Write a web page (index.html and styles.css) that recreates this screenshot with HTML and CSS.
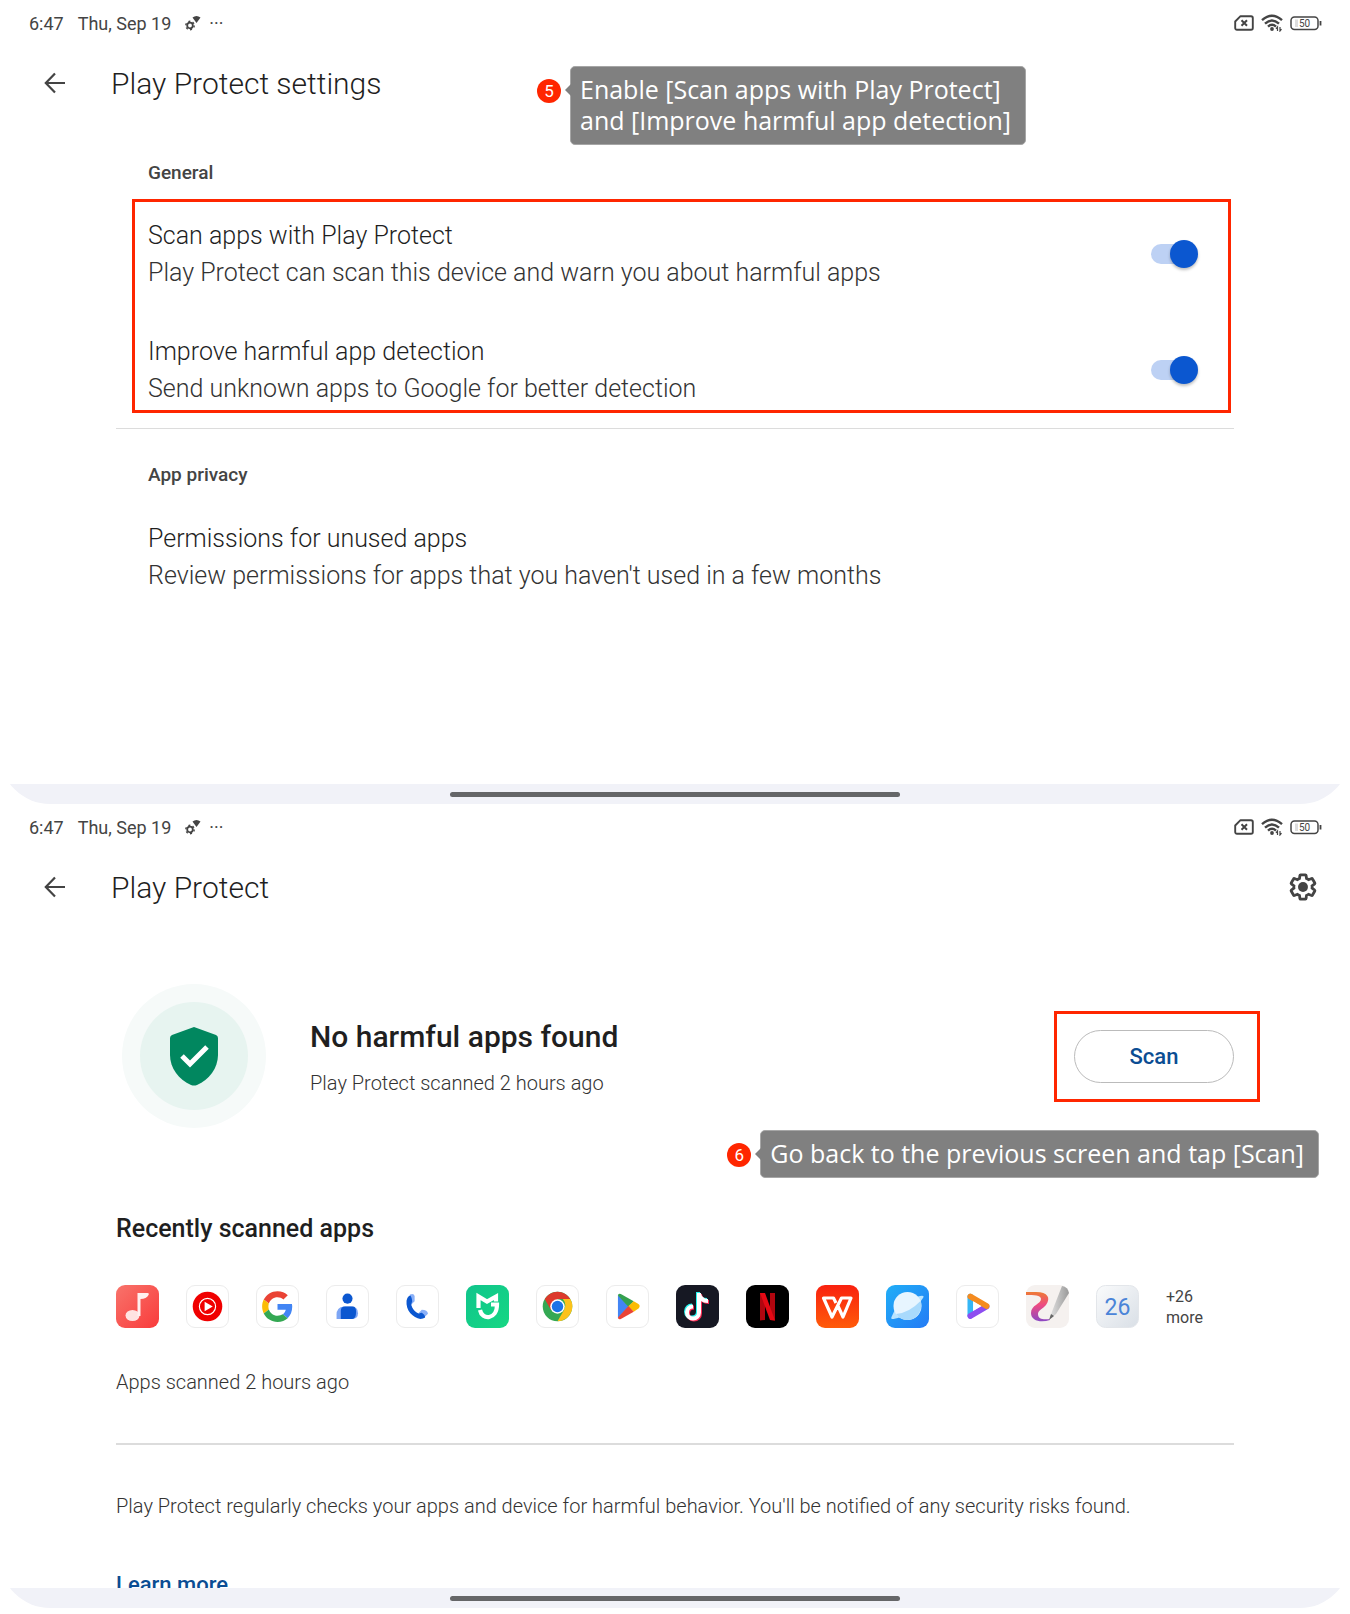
FILE: index.html
```html
<!DOCTYPE html>
<html lang="en">
<head>
    <meta charset="UTF-8">
    <meta name="viewport" content="width=device-width, initial-scale=1.0">
    <title>Play Protect</title>
    <link rel="stylesheet" href="styles.css">
</head>
<body>
    <!-- Shared status bar icons -->
    <svg class="sprite" aria-hidden="true">
        <symbol id="icon-gear-wifi" viewBox="0 0 16 16">
            <circle cx="5" cy="10.500" r="2.800" fill="none" stroke="currentColor" stroke-width="1.800"/>
            <circle cx="5" cy="10.500" r="4.200" fill="none" stroke="currentColor" stroke-width="1.400" stroke-dasharray="2 2.400"/>
            <path d="M7.500 2.500Q11.500-.5 15.500 2.500L11.500 8z" fill="currentColor"/>
        </symbol>
        <symbol id="icon-sim" viewBox="0 0 20 16">
            <path d="M6.500 1.200h10.500a1.800 1.800 0 0 1 1.800 1.800v10a1.800 1.800 0 0 1-1.800 1.800H3A1.800 1.800 0 0 1 1.200 13V6.500z" fill="none" stroke="currentColor" stroke-width="1.900" stroke-linejoin="round"/>
            <path d="M7.500 5.200l5.500 5.600M13 5.200l-5.500 5.600" stroke="currentColor" stroke-width="2"/>
        </symbol>
        <symbol id="icon-wifi" viewBox="0 0 22 18">
            <path d="M1 6.200Q11-2.800 21 6.200M4 9.600Q11 3.200 18 9.600M7 12.700Q11 9 15 12.700" fill="none" stroke="currentColor" stroke-width="2.400"/>
            <circle cx="11" cy="15" r="1.900" fill="currentColor"/>
            <path d="M16.500 17v-4l-1.500 1.800M19 13v4l1.500-1.800" fill="none" stroke="currentColor" stroke-width="1.200"/>
        </symbol>
        <symbol id="icon-battery" viewBox="0 0 32 15">
            <rect x="1" y="1" width="27" height="12.500" rx="3.500" fill="none" stroke="currentColor" stroke-width="1.500"/>
            <path d="M5 3.500h3v7.500H5z" fill="#ddd"/>
            <path d="M30.500 5v4.500" stroke="currentColor" stroke-width="1.800"/>
            <text x="14.500" y="11" font-size="10" text-anchor="middle" fill="currentColor">50</text>
        </symbol>
        <symbol id="icon-back" viewBox="0 0 22 22">
            <path d="M21 11H2M11 1.500L1.800 11l9.200 9.500" fill="none" stroke="currentColor" stroke-width="2.200"/>
        </symbol>
    </svg>

    <section class="screen">
        <div class="status-bar">
            <span>6:47</span>
            <span>Thu, Sep 19</span>
            <svg class="icon-alert"><use href="#icon-gear-wifi"/></svg>
            <span class="dots">···</span>
            <div class="status-right">
                <svg class="icon-sim"><use href="#icon-sim"/></svg>
                <svg class="icon-wifi"><use href="#icon-wifi"/></svg>
                <svg class="icon-battery"><use href="#icon-battery"/></svg>
            </div>
        </div>

        <header class="app-bar">
            <button class="icon-button" aria-label="Back"><svg class="icon-back"><use href="#icon-back"/></svg></button>
            <h1>Play Protect settings</h1>
        </header>

        <div class="callout callout-settings">
            <span class="step">5</span>
            <p class="bubble">Enable [Scan apps with Play Protect]<br>and [Improve harmful app detection]</p>
        </div>

        <main class="settings">
            <h2>General</h2>
            <div class="highlight">
                <div class="row">
                    <label for="scan-apps">
                        <span class="row-title">Scan apps with Play Protect</span>
                        <span class="row-text">Play Protect can scan this device and warn you about harmful apps</span>
                    </label>
                    <input type="checkbox" class="switch" id="scan-apps" checked>
                </div>
                <div class="row">
                    <label for="improve-detection">
                        <span class="row-title">Improve harmful app detection</span>
                        <span class="row-text">Send unknown apps to Google for better detection</span>
                    </label>
                    <input type="checkbox" class="switch" id="improve-detection" checked>
                </div>
            </div>
            <hr>
            <h2>App privacy</h2>
            <a class="row row-link" href="#permissions">
                <span class="row-title">Permissions for unused apps</span>
                <span class="row-text">Review permissions for apps that you haven't used in a few months</span>
            </a>
        </main>

        <div class="nav-bar"><span class="home"></span></div>
    </section>

    <section class="screen">
        <div class="status-bar">
            <span>6:47</span>
            <span>Thu, Sep 19</span>
            <svg class="icon-alert"><use href="#icon-gear-wifi"/></svg>
            <span class="dots">···</span>
            <div class="status-right">
                <svg class="icon-sim"><use href="#icon-sim"/></svg>
                <svg class="icon-wifi"><use href="#icon-wifi"/></svg>
                <svg class="icon-battery"><use href="#icon-battery"/></svg>
            </div>
        </div>

        <header class="app-bar">
            <button class="icon-button" aria-label="Back"><svg class="icon-back"><use href="#icon-back"/></svg></button>
            <h1>Play Protect</h1>
            <button class="icon-button settings-button" aria-label="Settings">
                <svg class="icon-settings" viewBox="1 1 22 22">
                    <path d="M19.140 12.940c.04-.3.06-.61.06-.94 0-.32-.02-.64-.07-.94l2.030-1.580c.18-.14.23-.41.12-.61l-1.920-3.320c-.12-.22-.37-.29-.59-.22l-2.390.96c-.5-.38-1.030-.7-1.620-.94l-.36-2.540c-.04-.24-.24-.41-.48-.41h-3.840c-.24 0-.43.17-.47.41l-.36 2.540c-.59.24-1.130.57-1.620.94l-2.390-.96c-.22-.08-.47 0-.59.22L2.740 8.870c-.12.21-.08.47.12.61l2.030 1.580c-.05.3-.09.63-.09.94s.02.64.07.94l-2.030 1.580c-.18.14-.23.41-.12.61l1.920 3.320c.12.22.37.29.59.22l2.390-.96c.5.38 1.030.7 1.620.94l.36 2.540c.05.24.24.41.48.41h3.840c.24 0 .44-.17.47-.41l.36-2.540c.59-.24 1.130-.56 1.620-.94l2.390.96c.22.08.47 0 .59-.22l1.920-3.320c.12-.22.07-.47-.12-.61z" fill="none" stroke="currentColor" stroke-width="2.200"/>
                    <circle cx="12" cy="12" r="3.900" fill="currentColor"/>
                </svg>
            </button>
        </header>

        <main class="protect">
            <div class="summary">
                <svg class="shield" viewBox="0 0 144 144">
                    <circle cx="72" cy="72" r="72" fill="#f6faf9"/>
                    <circle cx="72" cy="72" r="54" fill="#e7f4f0"/>
                    <path d="M72 43l22 8q2 1 2 3v17c0 13-9 25-21 30q-3 1-6 0c-12-5-21-17-21-30V54q0-2 2-3z" fill="#01875f"/>
                    <path d="M60 72l8 8 17-17" fill="none" stroke="#fff" stroke-width="5"/>
                </svg>
                <div class="summary-text">
                    <h2>No harmful apps found</h2>
                    <p>Play Protect scanned 2 hours ago</p>
                </div>
                <div class="highlight-scan">
                    <button class="scan">Scan</button>
                </div>
            </div>

            <div class="callout callout-scan">
                <span class="step">6</span>
                <p class="bubble">Go back to the previous screen and tap [Scan]</p>
            </div>

            <h3>Recently scanned apps</h3>
            <div class="apps">
                <svg class="app" viewBox="0 0 43 43">
                    <defs><linearGradient id="music" x2="1" y2="1"><stop stop-color="#f8736b"/><stop offset="1" stop-color="#f93b3b"/></linearGradient></defs>
                    <rect width="43" height="43" rx="9" fill="url(#music)"/>
                    <ellipse cx="16.500" cy="30.500" rx="7" ry="5.500" fill="#ffe3e1"/>
                    <path d="M21.500 8h10q2 0 1 2-2 4-8 4v17h-3z" fill="#fff0ef"/>
                </svg>
                <svg class="app app-light" viewBox="0 0 43 43">
                    <circle cx="21.500" cy="21.500" r="15.500" fill="#f00000"/>
                    <circle cx="21.500" cy="21.500" r="8.500" fill="none" stroke="#fff" stroke-width="1.200"/>
                    <path d="M18.500 16.500l8.500 5-8.500 5z" fill="#fff"/>
                </svg>
                <svg class="app app-light" viewBox="-8 -8 64 64">
                    <path fill="#ea4335" d="M24 9.500c3.540 0 6.710 1.220 9.210 3.600l6.850-6.850C35.900 2.380 30.470 0 24 0 14.620 0 6.510 5.380 2.560 13.220l7.980 6.190C12.430 13.720 17.740 9.500 24 9.500z"/>
                    <path fill="#4285f4" d="M46.980 24.550c0-1.570-.15-3.090-.38-4.550H24v9.020h12.940c-.58 2.960-2.260 5.480-4.780 7.180l7.730 6c4.510-4.180 7.090-10.360 7.090-17.650z"/>
                    <path fill="#fbbc05" d="M10.530 28.590c-.48-1.450-.76-2.990-.76-4.590s.27-3.140.76-4.590l-7.980-6.190C.92 16.460 0 20.120 0 24c0 3.880.92 7.540 2.560 10.780z"/>
                    <path fill="#34a853" d="M24 48c6.480 0 11.930-2.130 15.890-5.810l-7.730-6c-2.150 1.450-4.920 2.300-8.160 2.300-6.260 0-11.570-4.220-13.470-9.910l-7.980 6.190C6.510 42.620 14.620 48 24 48z"/>
                </svg>
                <svg class="app app-light" viewBox="0 0 43 43">
                    <path d="M10 34.500v-4q0-8.500 7.500-9h8q7 0 7 7 0 6-6 6z" fill="#7da6f5"/>
                    <path d="M14.500 34.500V26q0-4.500 4.500-4.500h8q3.500 0 3.500 5.500 0 7.500-4 7.500z" fill="#0b57d0"/>
                    <circle cx="21.500" cy="13.200" r="5.300" fill="#0b57d0"/>
                </svg>
                <svg class="app app-light" viewBox="0 0 43 43">
                    <path d="M13.500 9q4-2 5 1.500v5.500l-4 4zM22 29l4-4q6 0 6.500 4l-4 4z" fill="#8ab0f8"/>
                    <path d="M13.500 10c1 0 2 2 2.500 6q-1 2-1 4c1 4 4 7.500 8 9q1.500-1 3-1c2 1 3.500 3 3.500 5q-2 1.500-5 1.500C17 33.500 9 26 10 15.500q1-4.500 3.500-5.500z" fill="#0b57d0"/>
                </svg>
                <svg class="app" viewBox="0 0 43 43">
                    <defs><linearGradient id="home" x2="1" y2="1"><stop stop-color="#10c58c"/><stop offset="1" stop-color="#16d783"/></linearGradient></defs>
                    <rect width="43" height="43" rx="9" fill="url(#home)"/>
                    <path d="M12.500 23V11.500l8.500 5 9-5v5" fill="none" stroke="#fff" stroke-width="4.200"/>
                    <path d="M14 25c2 10.500 17 10 17-5.500h-6" fill="none" stroke="#fff" stroke-width="4.200"/>
                </svg>
                <svg class="app app-light" viewBox="0 0 43 43">
                    <circle cx="21.500" cy="21.500" r="15.500" fill="#34a853"/>
                    <path d="M8.100 13.700a15.500 15.500 0 0 1 26.800 0H21.500l-6.700 11.700z" fill="#dc3a2c"/>
                    <path d="M34.900 13.700A15.500 15.500 0 0 1 21.500 37l6.700-11.600q3.300-6-1-11.700z" fill="#fcc21b"/>
                    <circle cx="21.500" cy="21.500" r="7.600" fill="#fff"/>
                    <circle cx="21.500" cy="21.500" r="6" fill="#1a73e8"/>
                </svg>
                <svg class="app app-light" viewBox="0 0 43 43">
                    <path d="M11.500 9.500v24L23 21.500z" fill="#4285f4"/>
                    <path d="M11.500 10q0-2.500 3-1.500L28 16l-5.500 6z" fill="#34a04f"/>
                    <path d="M28 16l5 3q2.500 2 0 4.500L28 27l-6-5.500z" fill="#fbbc04"/>
                    <path d="M11.500 33q0 2.500 3 1.500L28 27l-5.500-6z" fill="#ea4335"/>
                </svg>
                <svg class="app" viewBox="0 0 43 43">
                    <rect width="43" height="43" rx="9" fill="#161823"/>
                    <g fill="none" stroke-width="4">
                        <path d="M22 7v19.500a6 6 0 1 1-6-6M22 8c1 4 4 7 9 7" stroke="#25f4ee"/>
                        <path d="M24 9v19.500a6 6 0 1 1-6-6M24 10c1 4 4 7 9 7" stroke="#fe2c55"/>
                        <path d="M23 8v19.500a6 6 0 1 1-6-6M23 9c1 4 4 7 9 7" stroke="#fff"/>
                    </g>
                </svg>
                <svg class="app" viewBox="0 0 43 43">
                    <rect width="43" height="43" rx="9" fill="#000"/>
                    <path d="M14 8h5v27l-5 .5zM24 8h5v27.500l-5-.5z" fill="#b1060f"/>
                    <path d="M14 8h5l10 27.500-5-.5z" fill="#e50914"/>
                </svg>
                <svg class="app" viewBox="0 0 43 43">
                    <defs><linearGradient id="office" x2="0" y2="1"><stop stop-color="#f9210f"/><stop offset="1" stop-color="#ff5b0a"/></linearGradient></defs>
                    <rect width="43" height="43" rx="9" fill="url(#office)"/>
                    <path d="M20 18l-2.500-5H7.500l8.500 19 9.500-19H35l-8 19-5-11" fill="none" stroke="#fff" stroke-width="3.200" stroke-linejoin="round"/>
                </svg>
                <svg class="app" viewBox="0 0 43 43">
                    <defs><linearGradient id="browser" x2="1" y2="1"><stop stop-color="#20aef7"/><stop offset="1" stop-color="#247bf5"/></linearGradient></defs>
                    <rect width="43" height="43" rx="9" fill="url(#browser)"/>
                    <path d="M9 24.500L5.500 32q-1 2.500 2 2Q25 31 37 13q2-3-3-2l-4 1z" fill="#b9e4ff"/>
                    <circle cx="21.500" cy="21" r="14" fill="#e7f5ff"/>
                    <path d="M10 29Q23 28 34.500 16c3 8-3 19-13 19q-7 0-11.500-6z" fill="#a9dafc"/>
                </svg>
                <svg class="app app-light" viewBox="0 0 43 43">
                    <path d="M14 11v20" stroke="#35b6f5" stroke-width="6" stroke-linecap="round"/>
                    <path d="M14 31.500L31 21.500" stroke="#8d4df0" stroke-width="6" stroke-linecap="round"/>
                    <path d="M14 11l17 10" stroke="#f58b1f" stroke-width="6" stroke-linecap="round"/>
                    <path d="M17 16l8.500 5-8.500 5z" fill="#fff"/>
                </svg>
                <svg class="app" viewBox="0 0 43 43">
                    <defs>
                        <linearGradient id="brush" x2="0" y2="1"><stop stop-color="#ee7a35"/><stop offset=".45" stop-color="#ed4a83"/><stop offset="1" stop-color="#8b48c4"/></linearGradient>
                        <linearGradient id="pen"><stop stop-color="#e4e4e4"/><stop offset="1" stop-color="#999"/></linearGradient>
                    </defs>
                    <rect width="43" height="43" rx="9" fill="#f5f1ef"/>
                    <path d="M0 7h10c12 0 15 6 10 13-3 4-8 5-8 9 0 5 5 6 12 5v1c-9 3-19 1-19-7 0-8 10-9 10-14 0-4-7-4-15-4z" fill="url(#brush)"/>
                    <path d="M23 35l4-11L36 1q6 1 7 7L30 29z" fill="url(#pen)"/>
                    <path d="M23 35l2-6 3 2z" fill="#666"/>
                </svg>
                <svg class="app" viewBox="0 0 43 43">
                    <defs><linearGradient id="calendar" x2="1" y2="1"><stop stop-color="#fafbfc"/><stop offset="1" stop-color="#d9dfe6"/></linearGradient></defs>
                    <rect x=".5" y=".5" width="42" height="42" rx="9" fill="url(#calendar)" stroke="#e3e6ea"/>
                    <text x="21.500" y="30" font-size="23" text-anchor="middle" fill="#4a84d8">26</text>
                </svg>
                <span class="apps-more">+26 more</span>
            </div>
            <p class="note">Apps scanned 2 hours ago</p>
            <hr class="divider">
            <p class="note">Play Protect regularly checks your apps and device for harmful behavior. You'll be notified of any security risks found.</p>
            <a class="learn-more" href="#learn">Learn more</a>
        </main>

        <div class="nav-bar"><span class="home"></span></div>
    </section>
</body>
</html>
```
FILE: styles.css
```css
* {
    box-sizing: border-box;
}

body {
    margin: 0;
    padding-bottom: 6px;
    font-family: Roboto, "Liberation Sans", sans-serif;
    background-color: #fff;
    color: #1f1f1f;
}

h1, h2, h3, p {
    margin: 0;
    font-weight: 400;
}

.sprite {
    display: none;
}

.screen {
    position: relative;
    overflow: hidden;
    border-radius: 0 0 50px 50px;
}

/* Status bar */
.status-bar {
    display: flex;
    align-items: center;
    height: 46px;
    padding: 0 28px 0 29px;
    font-size: 18px;
    color: #444;
}

.status-bar span {
    margin-right: 14px;
}

.icon-alert {
    width: 16px;
    height: 16px;
    margin-right: 8px;
}

.status-right {
    display: flex;
    align-items: center;
    gap: 7px;
    margin-left: auto;
}

.icon-sim {
    width: 20px;
    height: 16px;
}

.icon-wifi {
    width: 22px;
    height: 18px;
}

.icon-battery {
    width: 32px;
    height: 15px;
}

/* App bar */
.app-bar {
    display: flex;
    align-items: center;
    height: 74px;
    padding: 0 32px;
}

.app-bar h1 {
    margin-left: 34px;
    font-size: 30px;
    font-weight: 300;
}

.icon-button {
    display: flex;
    align-items: center;
    justify-content: center;
    width: 45px;
    height: 45px;
    padding: 0;
    border: none;
    background: none;
    color: #444;
    cursor: pointer;
}

.icon-back {
    width: 22px;
    height: 22px;
}

.settings-button {
    margin-left: auto;
    margin-right: -7px;
}

.icon-settings {
    width: 28px;
    height: 28px;
}

/* Settings list */
.settings {
    padding: 39px 116px 190px;
}

.settings h2 {
    margin-left: 32px;
    font-size: 19px;
    font-weight: 500;
    line-height: 28px;
    color: #444;
}

.highlight {
    display: flex;
    flex-direction: column;
    gap: 42px;
    margin: 12px 3px 15px 16px;
    padding: 15px 33px 3px 13px;
    border: 3px solid #ff2600;
}

.row {
    display: flex;
    align-items: center;
    justify-content: space-between;
}

.row-title, .row-text {
    display: block;
    font-size: 25px;
    font-weight: 300;
    line-height: 37px;
}

.row-text {
    color: #333;
}

.row-link {
    display: block;
    margin: 31px 0 0 32px;
    color: inherit;
    text-decoration: none;
}

.switch {
    appearance: none;
    position: relative;
    width: 44px;
    height: 20px;
    margin: 0;
    border-radius: 10px;
    background-color: #bdd1f4;
    cursor: pointer;
}

.switch::before {
    content: "";
    position: absolute;
    top: -4px;
    right: -3px;
    width: 28px;
    height: 28px;
    border-radius: 50%;
    background-color: #0b57d0;
    box-shadow: 0 2px 3px rgba(0, 0, 0, 0.25);
}

hr {
    height: 1px;
    margin: 0 0 32px;
    border: none;
    background-color: #dcdcdc;
}

/* Numbered callouts */
.callout {
    position: absolute;
    display: flex;
    align-items: flex-start;
    gap: 9px;
}

.callout-settings {
    top: 66px;
    left: 537px;
}

.callout-scan {
    top: 326px;
    right: 31px;
}

.step {
    width: 24px;
    height: 24px;
    margin-top: 13px;
    border-radius: 50%;
    background-color: #ff2600;
    color: #fff;
    font-size: 17px;
    line-height: 24px;
    text-align: center;
}

.bubble {
    position: relative;
    padding: 7px 14px 8px 9px;
    border: 1px solid #a6a6a6;
    border-radius: 5px;
    background-color: #808080;
    color: #fff;
    font-family: "Open Sans", "Noto Sans", sans-serif;
    font-size: 25px;
    line-height: 31px;
}

.bubble::before {
    content: "";
    position: absolute;
    top: 17px;
    left: -6px;
    border: 6px solid transparent;
    border-left: none;
    border-right-color: #808080;
}

/* Play Protect summary */
.protect {
    padding: 60px 116px 0;
}

.summary {
    display: flex;
    align-items: center;
}

.shield {
    width: 144px;
    height: 144px;
    margin-left: 6px;
}

.summary-text {
    flex: 1;
    margin-left: 44px;
    padding-top: 6px;
}

.summary-text h2 {
    font-size: 30px;
    font-weight: 500;
    line-height: 44px;
}

.summary-text p {
    margin-top: 4px;
    font-size: 20px;
    font-weight: 300;
    line-height: 40px;
    color: #333;
}

.highlight-scan {
    margin-right: -26px;
    padding: 16px 23px 16px 17px;
    border: 3px solid #ff2600;
}

.scan {
    display: block;
    width: 160px;
    height: 53px;
    border: 1px solid #bbb;
    border-radius: 27px;
    background: none;
    color: #0b4d93;
    font-family: inherit;
    font-size: 22px;
    font-weight: 500;
    cursor: pointer;
}

.protect h3 {
    margin-top: 85px;
    font-size: 25px;
    font-weight: 500;
    line-height: 32px;
}

.apps {
    display: flex;
    align-items: center;
    gap: 27px;
    margin: 40px 0 39px;
}

.app {
    width: 43px;
    height: 43px;
    flex: none;
}

.app-light {
    border: 1px solid #ececec;
    border-radius: 9px;
}

.apps-more {
    width: 43px;
    font-size: 16px;
    line-height: 21px;
    color: #444;
}

.note {
    font-size: 20px;
    font-weight: 300;
    line-height: 30px;
    color: #333;
}

.divider {
    height: 2px;
    margin: 46px 0;
}

/* Scrolled content runs under the navigation bar */
.learn-more {
    display: block;
    height: 20px;
    margin-top: 47px;
    color: #0b4d93;
    font-size: 22px;
    font-weight: 500;
    line-height: 34px;
    text-decoration: none;
}

.nav-bar {
    position: relative;
    display: flex;
    justify-content: center;
    height: 20px;
    padding-top: 8px;
    background-color: #f1f2f8;
}

.home {
    width: 33.333%;
    height: 5px;
    border-radius: 3px;
    background-color: #656668;
}
```
